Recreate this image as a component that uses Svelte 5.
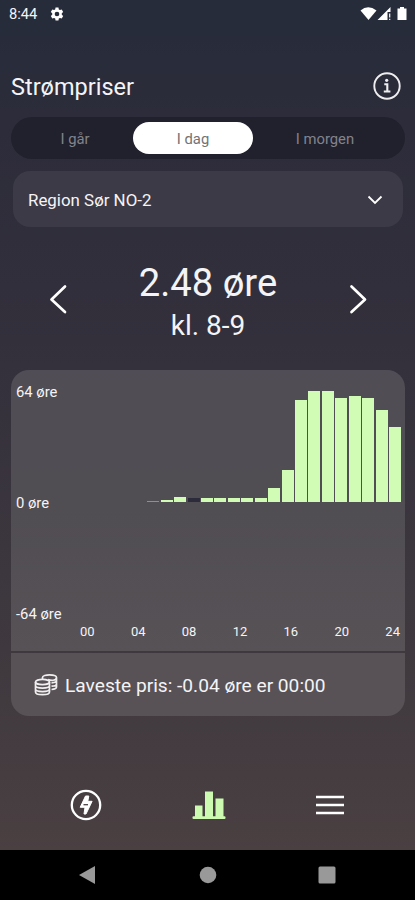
<script lang="ts">
	const days = ['I går', 'I dag', 'I morgen'];
	let selectedDay = $state(1);
	let hour = $state(8);

	const prices = [
		-0.04, 0, 0, 0, 0, 0.5, 1.2, 2.8, 2.48, 2.1, 2.1, 2.6, 2.1, 2.1, 8, 18.5, 59, 64, 64, 60, 61,
		60.2, 53.3, 43
	];
	const hourLabels = ['00', '04', '08', '12', '16', '20', '24'];
	const maxPrice = 64;

	let price = $derived(prices[hour]);

	function step(n: number) {
		hour = Math.min(23, Math.max(0, hour + n));
	}
</script>

<div class="screen">
	<div class="status-bar">
		<span class="clock">8:44</span>
		<svg class="gear" width="14" height="14" viewBox="0 0 24 24">
			<path
				fill="#fff"
				fill-rule="evenodd"
				d="M9.500 1h5l.6 3.200 2 1.100 3-1.100 2.500 4.300-2.400 2.200v2.600l2.400 2.200-2.500 4.300-3-1.100-2 1.100-.6 3.200h-5l-.6-3.200-2-1.100-3 1.100-2.500-4.300 2.400-2.200v-2.600L1.400 8.500l2.500-4.300 3 1.100 2-1.100zM12 8a4 4 0 1 0 0 8 4 4 0 0 0 0-8z"
			/>
		</svg>
		<svg class="signals" width="48" height="16" viewBox="0 0 48 16">
			<path fill="#fff" d="M.5 4.500Q8 -2 16.500 4.500L8.500 14z" />
			<path fill="#fff" d="M17.500 14L30.500 1v5h-3v8z" />
			<path stroke="#fff" stroke-width="1.200" d="M29.700 7.500v4M29.700 12.700V14" />
			<path fill="#fff" d="M40 1h4v1.500h2.500V14h-9V2.500H40z" />
		</svg>
	</div>

	<header>
		<h1>Strømpriser</h1>
		<button class="icon-button" aria-label="Info">
			<svg width="28" height="28" viewBox="0 0 28 28" fill="none" stroke="#eeeef0">
				<circle cx="14" cy="14" r="12.700" stroke-width="1.900" />
				<circle cx="13.700" cy="8.300" r="1.600" fill="#eeeef0" stroke="none" />
				<path d="M11.300 12.300h3v7.200M10.800 19.500h6.600" stroke-width="2.100" />
			</svg>
		</button>
	</header>

	<div class="tabs">
		{#each days as day, i}
			<button class="tab" class:active={selectedDay === i} onclick={() => (selectedDay = i)}>
				{day}
			</button>
		{/each}
	</div>

	<button class="region">
		<span>Region Sør NO-2</span>
		<svg width="16" height="10" viewBox="0 0 16 10" fill="none" stroke="#fff" stroke-width="1.800">
			<path d="M1.500 1.500L8 8l6.500-6.500" />
		</svg>
	</button>

	<section class="current">
		<button class="icon-button" aria-label="Forrige time" onclick={() => step(-1)}>
			<svg width="18" height="30" viewBox="0 0 18 30" fill="none" stroke="#fff" stroke-width="2.700">
				<path stroke-linecap="round" stroke-linejoin="round" d="M16 2.500L2.500 15.500 16 28" />
			</svg>
		</button>
		<div class="reading">
			<p class="price">{price} øre</p>
			<p class="hour">kl. {hour}-{hour + 1}</p>
		</div>
		<button class="icon-button" aria-label="Neste time" onclick={() => step(1)}>
			<svg width="18" height="30" viewBox="0 0 18 30" fill="none" stroke="#fff" stroke-width="2.700">
				<path stroke-linecap="round" stroke-linejoin="round" d="M2.500 2.500L16 15.500 2.500 28" />
			</svg>
		</button>
	</section>

	<section class="chart">
		<div class="y-axis">
			<span>64 øre</span>
			<span>0 øre</span>
			<span>-64 øre</span>
		</div>
		<div class="plot">
			<div class="bars">
				{#each prices as p, i}
					<div
						class="bar"
						class:selected={i === hour}
						class:faint={p < 1}
						style="height: {Math.max(0, (p / maxPrice) * 100)}%"
					></div>
				{/each}
			</div>
			<div class="x-axis">
				{#each hourLabels as label}
					<span>{label}</span>
				{/each}
			</div>
		</div>
	</section>

	<section class="lowest">
		<svg width="24" height="24" viewBox="0 0 24 24" fill="none" stroke="#f0eeef" stroke-width="1.700">
			<ellipse cx="8.500" cy="9" rx="7" ry="2.700" />
			<path d="M1.500 9v10c0 3.600 14 3.600 14 0V9M1.500 12.500c0 3.400 14 3.400 14 0M1.500 16c0 3.400 14 3.400 14 0" />
			<path d="M8.500 4.500c0-3.600 14-3.600 14 0s-6 3-8.500 2M8.500 4.500v1.800M22.500 4.500v9.500c0 1.400-2.500 2.200-5 2.500M17.500 9.800c3-.2 5-.9 5-2.300M17.500 13.200c3-.2 5-.9 5-2.300" />
		</svg>
		<span>Laveste pris: -0.04 øre er 00:00</span>
	</section>

	<nav>
		<button class="icon-button" aria-label="Strøm">
			<svg width="34" height="34" viewBox="0 0 34 34">
				<circle cx="17" cy="17" r="14.200" fill="none" stroke="#fff" stroke-width="2.300" />
				<path
					fill="#fff"
					stroke="#fff"
					stroke-linejoin="round"
					fill-rule="evenodd"
					d="M16.500 8h3.300l-1 5.300h4.300L17 26h-2l1-6.700h-4.800z"
				/>
				<path stroke="#483f42" stroke-width="1.300" d="M14.500 16.700h4.500" />
			</svg>
		</button>
		<button class="icon-button" aria-label="Priser">
			<svg width="34" height="30" viewBox="0 0 34 30" fill="#ccfab0">
				<rect x="3" y="15.500" width="7.500" height="12" />
				<rect x="13" y="1.500" width="8" height="26" />
				<rect x="23.500" y="8.500" width="8" height="19" />
				<rect x=".5" y="26.300" width="33" height="2.700" rx="1" />
			</svg>
		</button>
		<button class="icon-button" aria-label="Meny">
			<svg width="30" height="22" viewBox="0 0 30 22" stroke="#fff" stroke-width="2.400">
				<path d="M1 3h28M1 11h28M1 19h28" />
			</svg>
		</button>
	</nav>

	<div class="system-bar">
		<svg width="18" height="20" viewBox="0 0 18 20"><path fill="#999" d="M0 10L16 1v18z" /></svg>
		<svg width="18" height="18" viewBox="0 0 18 18"><circle cx="9" cy="9" r="8.300" fill="#999" /></svg>
		<svg width="18" height="18" viewBox="0 0 18 18"><rect x=".5" y=".5" width="17" height="17" rx="1.500" fill="#999" /></svg>
	</div>
</div>

<style>
	:global(body) {
		margin: 0;
		background: #000;
	}

	.screen {
		width: 415px;
		height: 900px;
		box-sizing: border-box;
		display: flex;
		flex-direction: column;
		overflow: hidden;
		font-family: Roboto, 'Liberation Sans', sans-serif;
		color: #f4f4f6;
		background: linear-gradient(#262c3a 0, #2d2c3a 130px, #33303c 340px, #413a3f 700px, #4a4042 850px);
	}

	button {
		padding: 0;
		border: 0;
		background: none;
		font: inherit;
		color: inherit;
	}

	.icon-button,
	svg {
		display: block;
		flex: none;
	}

	.status-bar {
		display: flex;
		align-items: center;
		height: 28px;
		padding: 0 7px 0 9px;
	}

	.clock {
		font-size: 14.700px;
		width: 41px;
	}

	.signals {
		margin-left: auto;
	}

	header {
		display: flex;
		align-items: center;
		justify-content: space-between;
		height: 60px;
		margin-top: 28px;
		padding: 0 14px 0 11px;
	}

	h1 {
		margin: 0;
		padding-top: 1px;
		font-size: 23.500px;
		font-weight: 400;
	}

	.tabs {
		display: flex;
		flex: none;
		box-sizing: border-box;
		height: 42px;
		margin: 1px 10px 0 11px;
		padding: 5px 18px 5px 4px;
		border-radius: 21px;
		background: #20212d;
	}

	.tab {
		width: 118px;
		padding-top: 1px;
		font-size: 14.800px;
		color: #83838c;
	}

	.tab:first-child {
		padding-left: 2px;
	}

	.tab:last-child {
		margin-left: 13px;
	}

	.tab.active {
		width: 120px;
		border-radius: 16px;
		background: #fff;
		color: #737373;
	}

	.region {
		display: flex;
		flex: none;
		align-items: center;
		justify-content: space-between;
		height: 56px;
		margin: 12px 12px 0 13px;
		padding: 2px 20px 0 15px;
		border-radius: 17px;
		background: #3c3a46;
		font-size: 16.900px;
	}

	.current {
		display: flex;
		align-items: center;
		justify-content: space-between;
		height: 143px;
		padding: 0 48px 0 49px;
	}

	.reading {
		padding-top: 8px;
		text-align: center;
	}

	.price,
	.hour {
		margin: 0;
	}

	.price {
		font-size: 38.200px;
		line-height: 46px;
	}

	.hour {
		font-size: 28px;
		line-height: 40px;
	}

	.chart {
		display: flex;
		flex: none;
		box-sizing: border-box;
		height: 281px;
		margin: 0 10px 0 11px;
		padding-right: 4px;
		border-radius: 18px 18px 0 0;
		background: linear-gradient(#504d56, #504d53 50%, #575256);
	}

	.y-axis {
		display: flex;
		flex-direction: column;
		justify-content: space-between;
		box-sizing: border-box;
		width: 69px;
		height: 252px;
		padding: 14px 0 0 5px;
		font-size: 14.800px;
		line-height: 16px;
	}

	.plot {
		flex: 1;
		padding-top: 21px;
	}

	.bars {
		display: flex;
		align-items: flex-end;
		gap: 1.400px;
		height: 111px;
	}

	.bar {
		flex: 1;
		background: #d0fcb6;
	}

	.bar.faint {
		background: #918f8c;
	}

	.bar.selected {
		background: #2b2b3c;
	}

	.x-axis {
		display: flex;
		justify-content: space-between;
		margin-top: 122px;
		padding-right: 1px;
		font-size: 13px;
		line-height: 16px;
	}

	.lowest {
		display: flex;
		flex: none;
		align-items: center;
		gap: 7px;
		height: 63px;
		margin: 2px 10px 0 11px;
		padding-left: 23px;
		border-radius: 0 0 18px 18px;
		background: #585256;
		font-size: 19.150px;
	}

	.lowest span {
		padding-top: 2px;
	}

	nav {
		display: flex;
		align-items: center;
		justify-content: space-between;
		height: 90px;
		margin-top: auto;
		padding: 0 70px 0 69px;
	}

	.system-bar {
		display: flex;
		flex: none;
		align-items: center;
		justify-content: space-between;
		height: 50px;
		padding: 0 79px;
		background: #000;
	}
</style>
